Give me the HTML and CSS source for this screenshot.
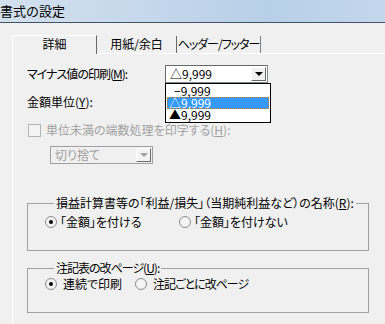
FILE: index.html
```html
<!DOCTYPE html>
<html lang="ja">
<head>
    <meta charset="UTF-8">
    <title>書式の設定</title>
    <link rel="stylesheet" href="styles.css">
</head>
<body>
    <div class="titlebar">書式の設定</div>
    <div class="dialog">
        <div class="tabs">
            <div class="tab active">詳細</div>
            <div class="tab">用紙/余白</div>
            <div class="tab tight">ヘッダー/フッター</div>
        </div>
        <div class="panel">
            <div class="row">
                <span class="label tight">マイナス値の印刷(<u>M</u>):</span>
                <div class="combo">
                    <span class="value">△9,999</span>
                    <span class="btn"><i class="arrow"></i></span>
                    <ul class="droplist">
                        <li>&minus;9,999</li>
                        <li class="sel">△9,999</li>
                        <li>▲9,999</li>
                    </ul>
                </div>
            </div>
            <div class="row row2">
                <span class="label">金額単位(<u>Y</u>):</span>
            </div>
            <div class="row row3 disabled">
                <span class="check"></span>
                <span class="label">単位未満の端数処理を印字する(<u>H</u>):</span>
            </div>
            <div class="combo small disabled">
                <span class="value">切り捨て</span>
                <span class="btn"><i class="arrow"></i></span>
            </div>

            <fieldset class="group g1">
                <legend>損益計算書等の「利益/損失」（当期純利益など）の名称(<u>R</u>):</legend>
                <div class="radios">
                    <label class="radio on"><span class="dot"></span>「金額」を付ける</label>
                    <label class="radio"><span class="dot"></span>「金額」を付けない</label>
                </div>
            </fieldset>

            <fieldset class="group g2">
                <legend class="tight">注記表の改ページ(<u>U</u>):</legend>
                <div class="radios">
                    <label class="radio on"><span class="dot"></span>連続で印刷</label>
                    <label class="radio tight"><span class="dot"></span>注記ごとに改ページ</label>
                </div>
            </fieldset>
        </div>
    </div>
</body>
</html>
```

FILE: styles.css
```css
body{
    margin: 0;
    padding: 0;
    background: #f0f0f0;
    font-family: "Noto Sans CJK JP", "Liberation Sans", sans-serif;
    font-size: 12px;
    line-height: 16px;
    font-feature-settings: "palt";
    color: #000;
    white-space: nowrap;
    overflow: hidden;
}
u{
    text-decoration: underline;
}
.tight{
    letter-spacing: -1px;
}
.titlebar{
    height: 22px;
    line-height: 21px;
    font-size: 13px;
    background: linear-gradient(to right, #d3e0ee 0%, #c6d8eb 35%, #b7cfe8 70%, #c3d7ec 100%);
    border-bottom: 1px solid #44556a;
    font-feature-settings: normal;
}
.dialog{
    padding: 12px 0 0 12px;
}
.tabs{
    display: flex;
    height: 18px;
    align-items: flex-end;
}
.tab{
    height: 17px;
    line-height: 16px;
    text-align: center;
    border-right: 1px solid #696969;
    box-sizing: border-box;
}
.tab:nth-child(2){
    width: 80px;
}
.tab:nth-child(3){
    width: 84px;
    border-right-color: #808080;
}
.tab.active{
    width: 85px;
    height: 19px;
    border-left: 1px solid #fff;
    border-top: 1px solid #fff;
    margin-bottom: -1px;
    position: relative;
    z-index: 1;
    background: #f0f0f0;
}
.panel{
    border-top: 1px solid #fff;
    border-left: 1px solid #fff;
    padding: 11px 0 20px 14px;
}
.row{
    display: flex;
    align-items: center;
    height: 18px;
}
.row .label{
    width: 138px;
}
.row2{
    margin-top: 10px;
}
.row3{
    margin-top: 10px;
}
.disabled{
    color: #a0a0a0;
}
.check{
    width: 11px;
    height: 11px;
    border: 1px solid #b4b4b4;
    background: #f4f4f4;
    margin: 0 5px 0 1px;
}
.row3 .label{
    width: auto;
}
.combo{
    position: relative;
    width: 103px;
    height: 18px;
    box-sizing: border-box;
    border: 1px solid #828790;
    border-top-color: #696969;
    border-left-color: #696969;
    background: #fff;
    display: flex;
    align-items: center;
}
.combo .value{
    flex: 1;
    padding-left: 4px;
}
.combo .btn{
    width: 15px;
    height: 14px;
    margin-right: 1px;
    background: #f0f0f0;
    border: 1px solid #fff;
    border-right-color: #696969;
    border-bottom-color: #696969;
    box-sizing: border-box;
    display: flex;
    align-items: center;
    justify-content: center;
}
.arrow{
    width: 0;
    height: 0;
    border-left: 4px solid transparent;
    border-right: 4px solid transparent;
    border-top: 4px solid #000;
}
.combo.small{
    margin: 7px 0 0 23px;
    background: #f0f0f0;
    border-color: #a0a0a0;
}
.combo.small .arrow{
    border-top-color: #a0a0a0;
}
.combo.small .btn{
    background: #f4f4f4;
}
.droplist{
    position: absolute;
    left: -1px;
    top: 17px;
    width: 104px;
    margin: 0;
    padding: 1px 0;
    list-style: none;
    background: #fff;
    border: 1px solid #000;
    z-index: 5;
}
.droplist li{
    height: 12px;
    line-height: 12px;
    padding-left: 2px;
    margin: 0 1px;
}
.droplist li:first-child{
    padding-left: 7px;
}
.droplist li.sel{
    background: #3399ff;
    color: #fff;
    outline: 1px dotted #d87a1a;
    outline-offset: -1px;
}
.group{
    margin: 0;
    width: 342px;
    box-sizing: border-box;
    border: 1px solid #a0a0a0;
    padding: 0 0 0 17px;
}
.group legend{
    padding: 0 2px;
    margin-left: 9px;
    line-height: 16px;
}
.g1{
    margin-top: 31px;
    height: 56px;
}
.g1 .radios{
    margin-top: 3px;
}
.g1 .radio:first-child{
    width: 134px;
}
.g2{
    margin-top: 9px;
    height: 53px;
}
.g2 .radio:first-child{
    width: 90px;
}
.radios{
    display: flex;
    align-items: center;
    height: 16px;
}
.radio{
    display: flex;
    align-items: center;
    gap: 3px;
}
.g2 .radio{
    gap: 6px;
}
.dot{
    width: 10px;
    height: 10px;
    border-radius: 50%;
    border: 1px solid #8d8d8d;
    background: #f4f4f4;
    position: relative;
}
.radio.on .dot::after{
    content: "";
    position: absolute;
    left: 3px;
    top: 3px;
    width: 4px;
    height: 4px;
    border-radius: 50%;
    background: #000;
}
```
